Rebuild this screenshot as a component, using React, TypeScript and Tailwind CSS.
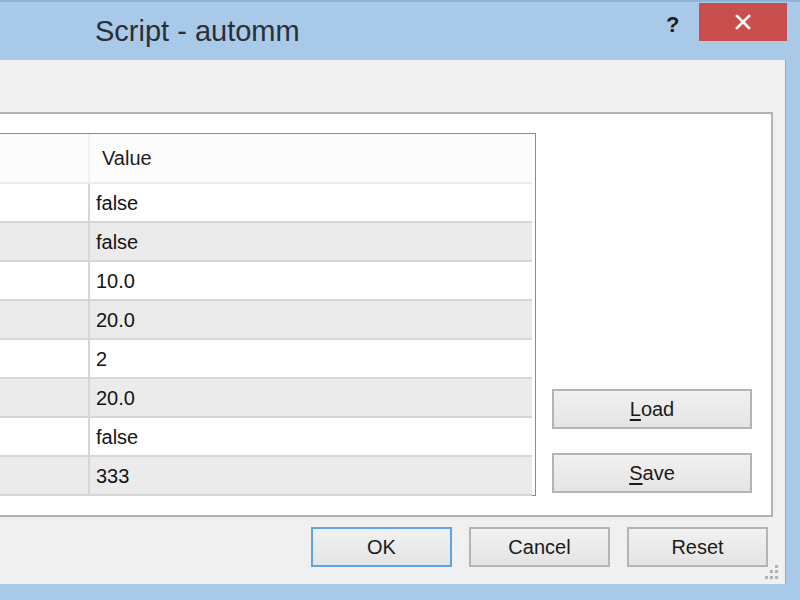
import React from "react";

const font = { fontFamily: '"Liberation Sans", Arial, sans-serif' };

const values = ["false", "false", "10.0", "20.0", "2", "20.0", "false", "333"];

function Btn({ children, w, primary }: { children: React.ReactNode; w: string; primary?: boolean }) {
  return (
    <div
      className={`${w} h-[40px] flex items-center justify-center text-[20px] text-[#1a1a1a] bg-gradient-to-b from-[#f1f1f1] to-[#e4e4e4] ${
        primary ? "border-2 border-[#5ea3e6]" : "border-2 border-[#b4b4b4]"
      }`}
    >
      {children}
    </div>
  );
}

export default function App() {
  return (
    <div style={font} className="w-[800px] h-[600px] overflow-hidden bg-[#a9c9e9] flex flex-col">
      {/* Title bar */}
      <div className="h-[60px] shrink-0 flex items-start border-t-2 border-[#8fb1d2]">
        <div className="pl-[95px] pt-[10px] text-[29px] text-[#2b2f36] leading-[38px] flex-1">Script - automm</div>
        <div className="pt-[9px] w-[33px] text-[22px] font-bold text-[#1c1c1c] leading-[28px]">?</div>
        <div className="mt-[1px] w-[88px] h-[38px] bg-[#c84f4e] flex items-center justify-center">
          <svg width="16" height="16" viewBox="0 0 16 16">
            <path d="M2 2 L14 14 M14 2 L2 14" stroke="#ffffff" strokeWidth="2.6" strokeLinecap="square" />
          </svg>
        </div>
        <div className="w-[13px]" />
      </div>

      {/* Body */}
      <div className="flex">
        <div className="w-[786px] h-[524px] bg-[#f0f0f0] border-r border-[#8cb0d4] flex flex-col relative">
          <div className="h-[52px]" />
          {/* Panel */}
          <div className="w-[773px] h-[405px] bg-white border-t-2 border-r-2 border-b-2 border-[#b2b2b2] flex">
            <div className="pt-[19px]">
              <div className="w-[536px] h-[363px] border-t border-r border-b border-[#8a8a8a] bg-white pr-[3px]">
                {/* header */}
                <div className="h-[50px] flex bg-[#fcfcfd] border-b-2 border-[#e8eef5]">
                  <div className="w-[90px] border-r-2 border-[#f0f3f6]" />
                  <div className="pl-[12px] flex items-center text-[20px] text-[#1e1e1e]">Value</div>
                </div>
                {values.map((v, i) => (
                  <div
                    key={i}
                    className={`h-[39px] flex border-b-2 border-[#d6d6d6] ${i % 2 === 1 ? "bg-[#ebebeb]" : "bg-white"}`}
                  >
                    <div className="w-[90px] border-r-2 border-[#d6d6d6]" />
                    <div className="pl-[6px] flex items-center text-[20px] text-[#141414]">{v}</div>
                  </div>
                ))}
              </div>
            </div>
            <div className="ml-[16px] pt-[275px] flex flex-col gap-[24px]">
              <Btn w="w-[200px]">
                <span>
                  <span className="underline underline-offset-[3px]">L</span>oad
                </span>
              </Btn>
              <Btn w="w-[200px]">
                <span>
                  <span className="underline underline-offset-[3px]">S</span>ave
                </span>
              </Btn>
            </div>
          </div>
          {/* Bottom buttons */}
          <div className="mt-[10px] flex gap-[17px] pl-[311px]">
            <Btn w="w-[141px]" primary>
              OK
            </Btn>
            <Btn w="w-[141px]">Cancel</Btn>
            <Btn w="w-[141px]">Reset</Btn>
          </div>
          <svg className="absolute left-[764px] top-[504px]" width="16" height="18" viewBox="0 0 16 18">
            <g fill="#b0b0b0">
              <rect x="11" y="1" width="3" height="3" />
              <rect x="6" y="6" width="3" height="3" />
              <rect x="11" y="6" width="3" height="3" />
              <rect x="1" y="12" width="3" height="3" />
              <rect x="6" y="12" width="3" height="3" />
              <rect x="11" y="12" width="3" height="3" />
            </g>
          </svg>
        </div>
      </div>
    </div>
  );
}
